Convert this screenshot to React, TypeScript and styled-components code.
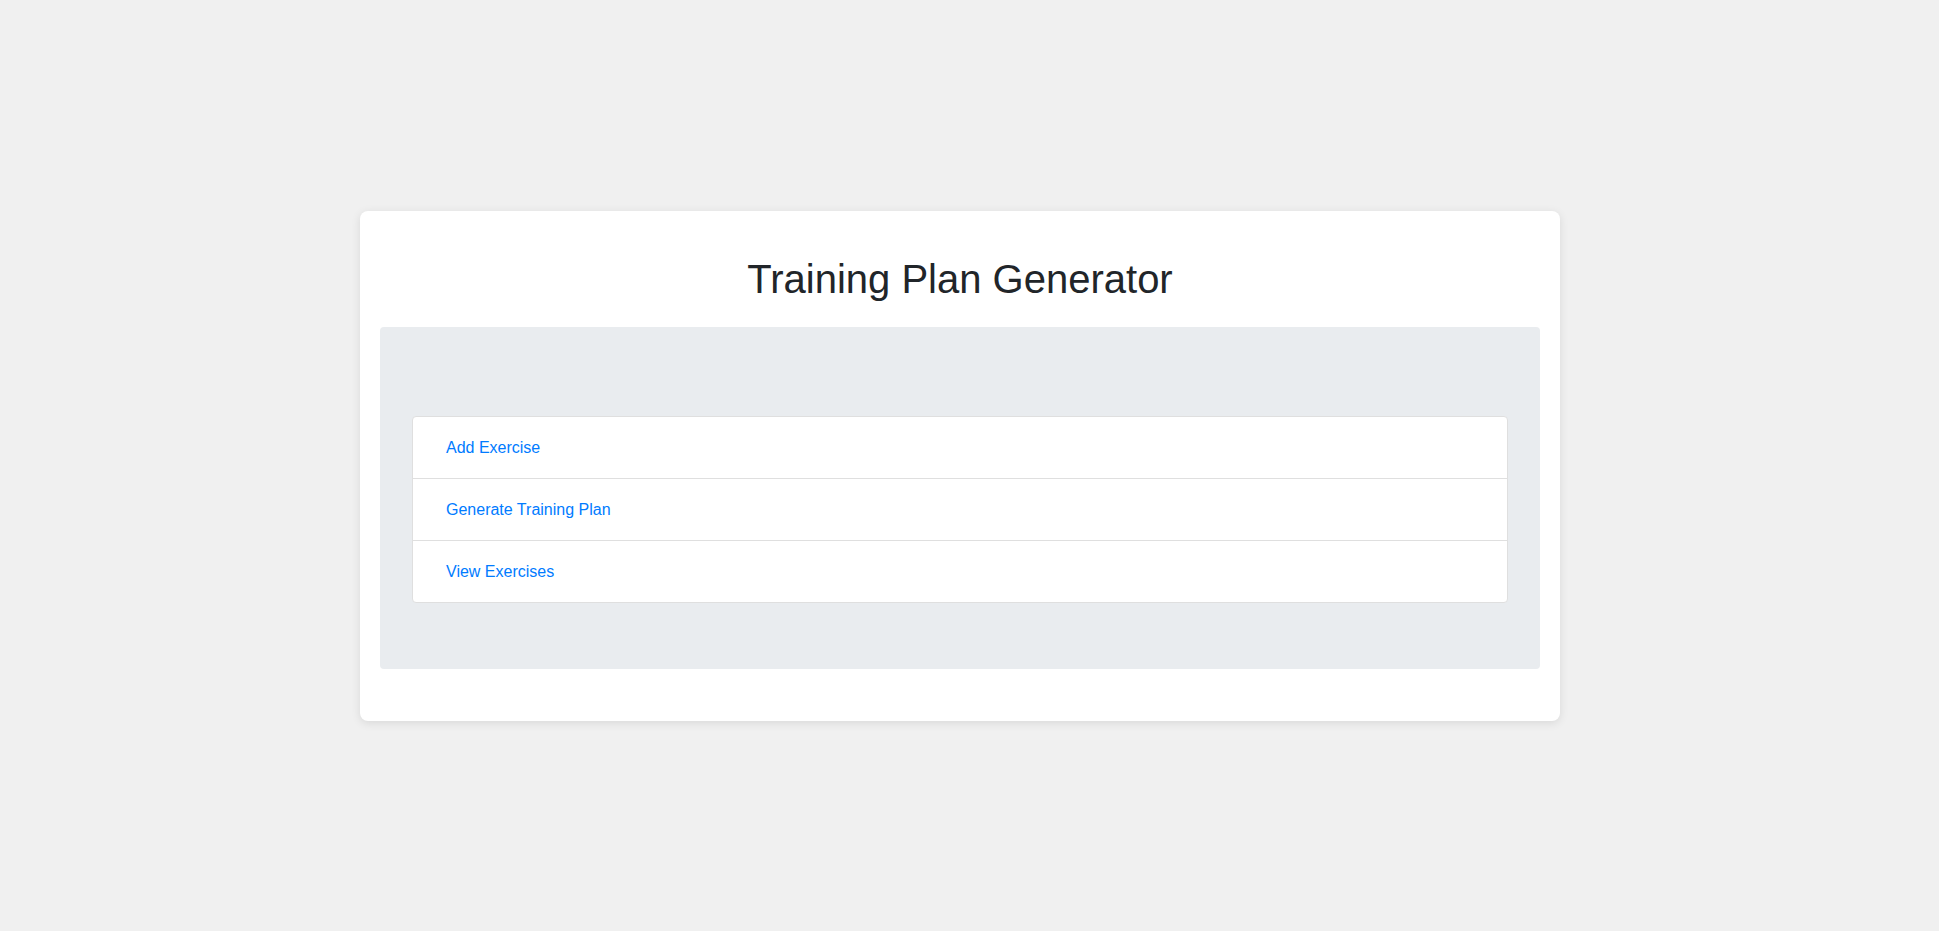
import React from "react";
import styled, { createGlobalStyle } from "styled-components";

const GlobalStyle = createGlobalStyle`
  html, body {
    margin: 0;
    padding: 0;
    background: #f0f0f0;
    font-family: "Liberation Sans", Arial, Helvetica, sans-serif;
    color: #212529;
  }
  * { box-sizing: border-box; }
`;

const Page = styled.div`
  min-height: 100vh;
  display: flex;
  align-items: center;
  justify-content: center;
  padding-right: 19px;
`;

const Card = styled.div`
  width: 1200px;
  background: #ffffff;
  border-radius: 8px;
  box-shadow: 0 2px 10px rgba(0, 0, 0, 0.1);
  padding: 20px;
`;

const Title = styled.h1`
  margin: 24px 0;
  font-size: 40px;
  line-height: 48px;
  font-weight: 400;
  text-align: center;
  color: #212529;
`;

const Panel = styled.div`
  background: #e9ecef;
  border-radius: 4px;
  padding: 89px 32px 66px;
  margin-bottom: 32px;
`;

const List = styled.ul`
  list-style: none;
  margin: 0;
  padding: 0;
  background: #ffffff;
  border: 1px solid #dfdfdf;
  border-radius: 4px;
`;

const Item = styled.li<{ $first?: boolean }>`
  border-top: ${(p) => (p.$first ? "none" : "1px solid #dfdfdf")};
  padding: 18px 33px;
  line-height: 25px;
  font-size: 16px;
`;

const ItemLink = styled.a`
  color: #007bff;
  text-decoration: none;
  cursor: pointer;
`;

const items = ["Add Exercise", "Generate Training Plan", "View Exercises"];

export default function App() {
  return (
    <>
      <GlobalStyle />
      <Page>
        <Card>
          <Title>Training Plan Generator</Title>
          <Panel>
            <List>
              {items.map((label, i) => (
                <Item key={label} $first={i === 0}>
                  <ItemLink href="#">{label}</ItemLink>
                </Item>
              ))}
            </List>
          </Panel>
        </Card>
      </Page>
    </>
  );
}
